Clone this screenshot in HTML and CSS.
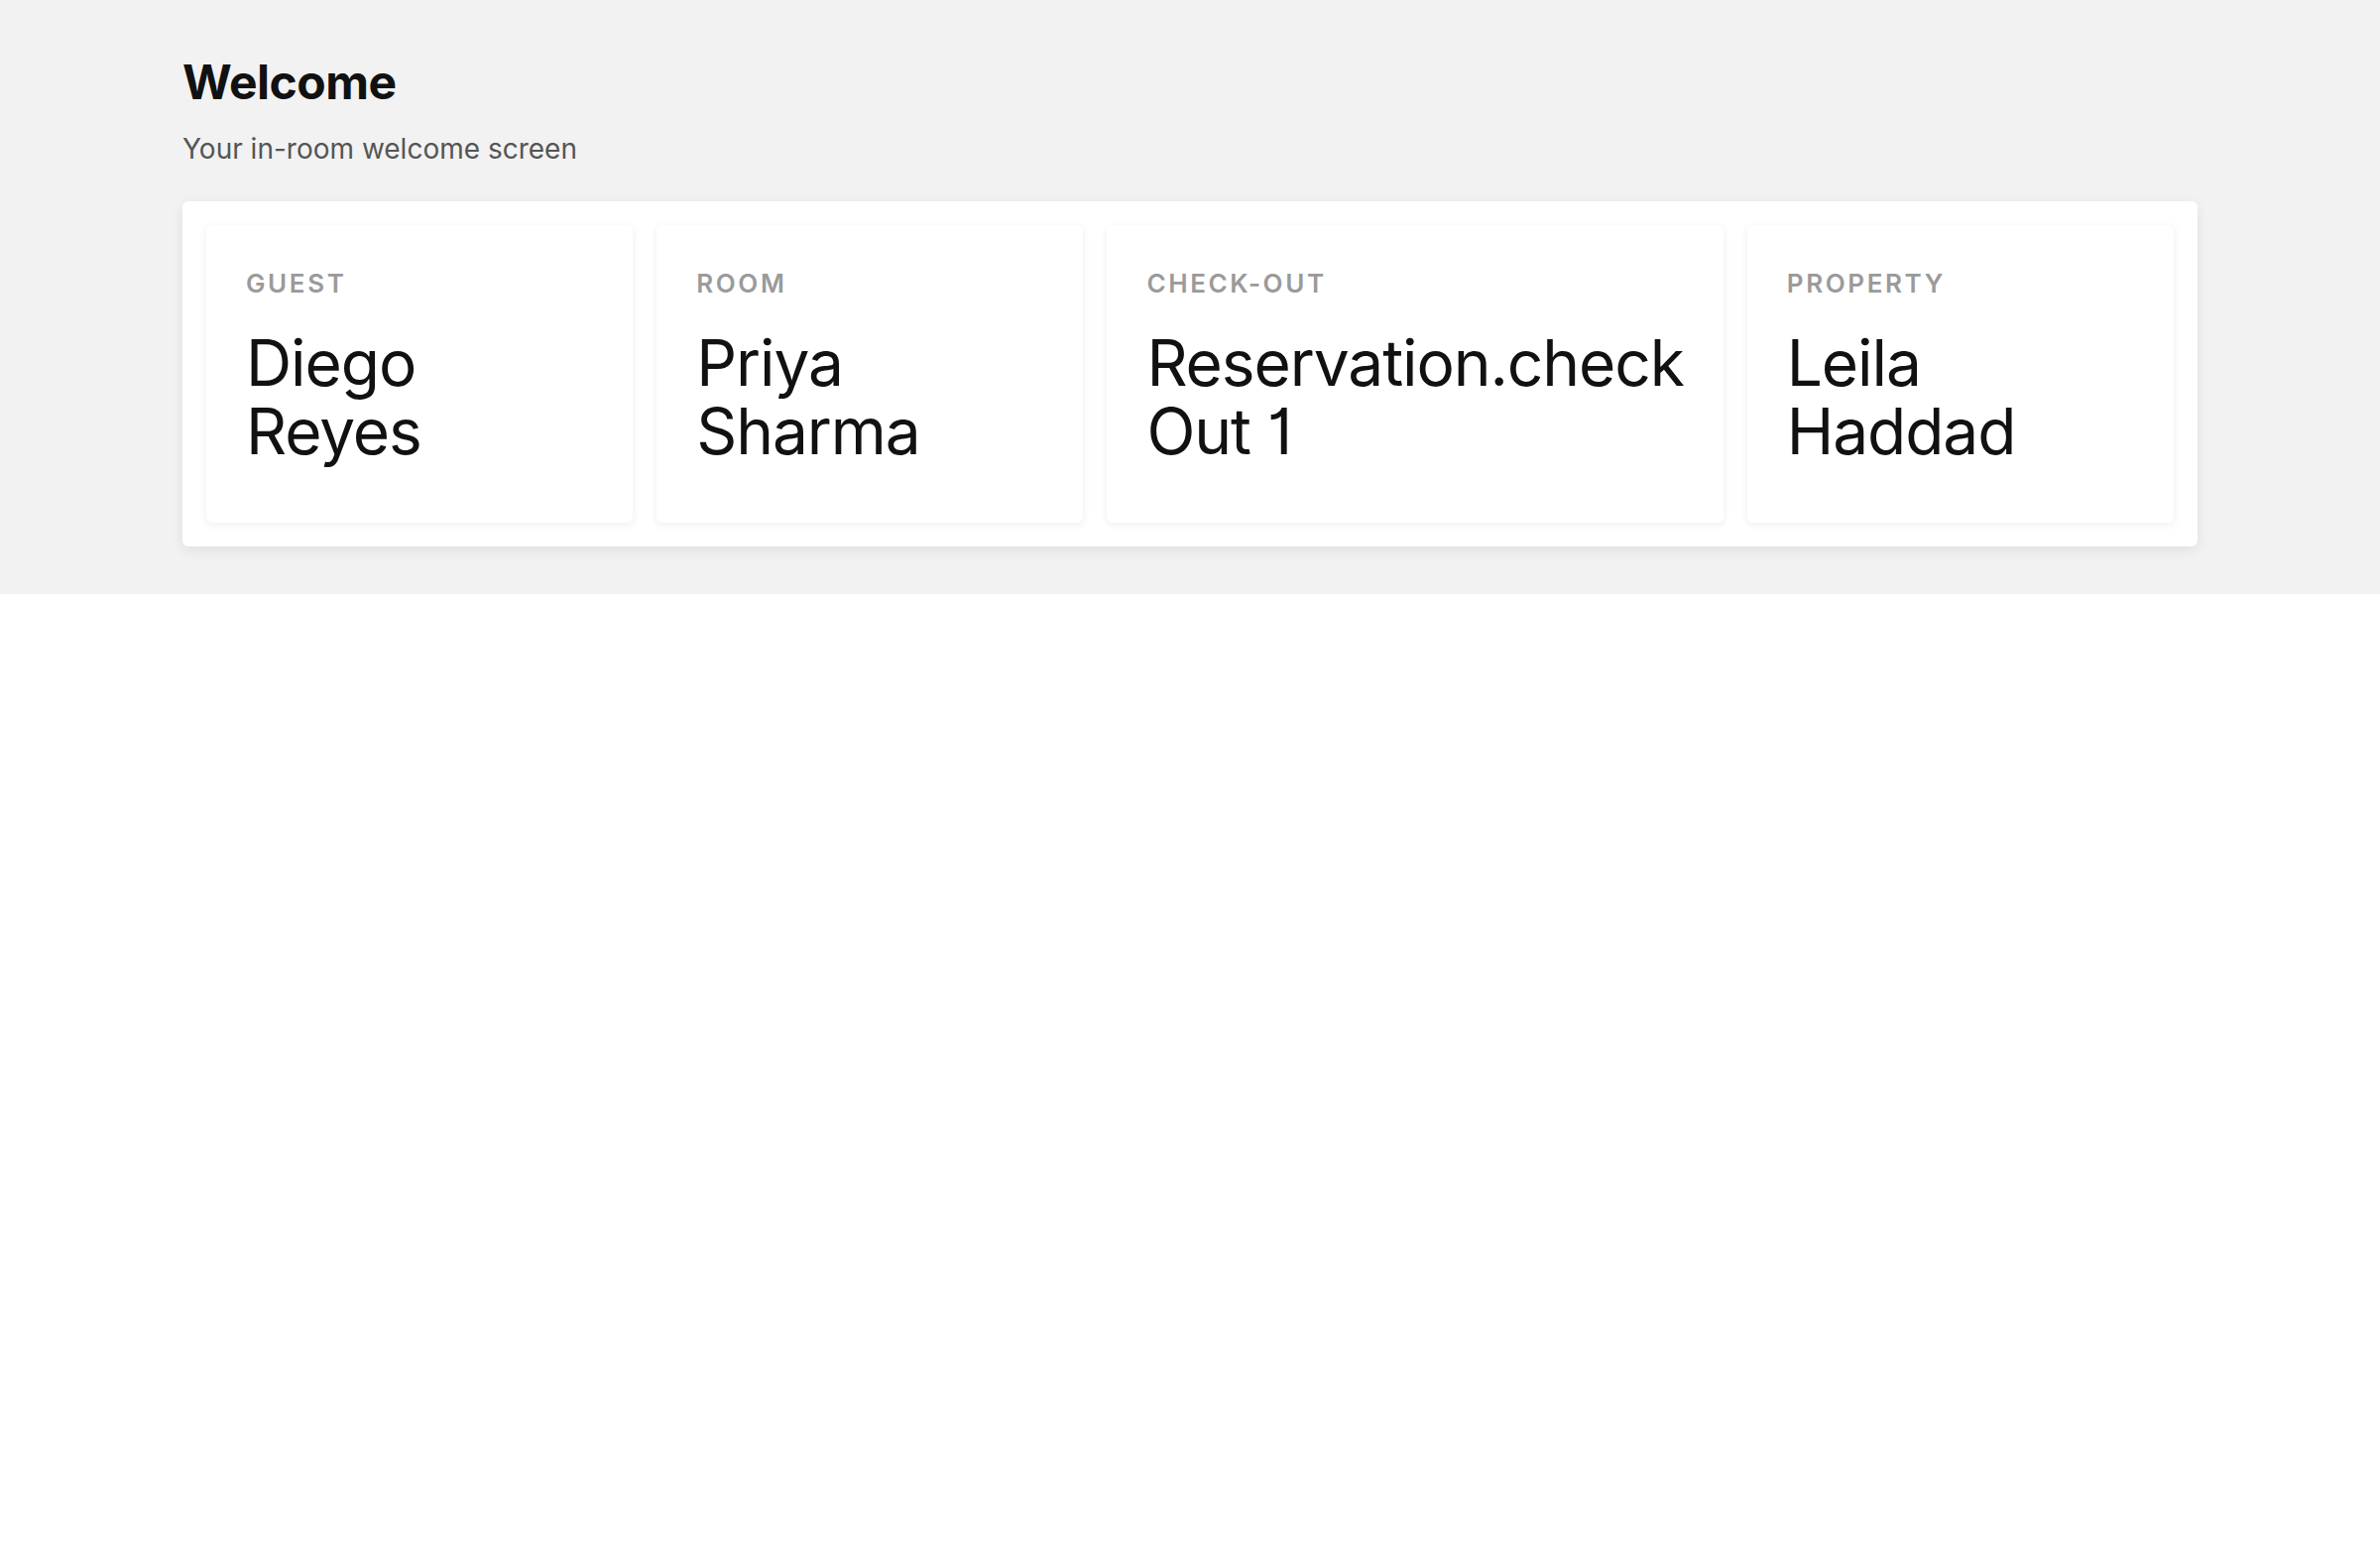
FILE: index.html
```html
<!DOCTYPE html>
<html>

	<head>
		<meta charset="UTF-8">
		<title>Welcome</title>
		<link rel="stylesheet" href="styles.css">
	</head>

	<body>
		<!--页头：标题 + 信息卡片-->
		<div class="hero">
			<div class="wrap">
				<h1 class="title">Welcome</h1>
				<p class="subtitle">Your in-room welcome screen</p>

				<div class="panel">
					<div class="info-card">
						<div class="info-label">Guest</div>
						<div class="info-value">Diego Reyes</div>
					</div>
					<div class="info-card">
						<div class="info-label">Room</div>
						<div class="info-value">Priya Sharma</div>
					</div>
					<div class="info-card">
						<div class="info-label">Check-out</div>
						<div class="info-value">Reservation.check Out 1</div>
					</div>
					<div class="info-card">
						<div class="info-label">Property</div>
						<div class="info-value">Leila Haddad</div>
					</div>
				</div>
			</div>
		</div>
	</body>

</html>
```

FILE: styles.css
```css
* {
	margin: 0;
	padding: 0;
	box-sizing: border-box;
}

body {
	background: #fff;
	font-family: Inter, "Noto Sans", sans-serif;
	color: #111;
}

.hero {
	background: #f2f2f2;
	padding: 53px 0 48px;
}

.wrap {
	max-width: 2032px;
	margin: 0 auto;
}

.title {
	font-size: 48px;
	font-weight: 700;
	line-height: 1.25;
	letter-spacing: -0.01em;
	color: #111;
}

.subtitle {
	margin-top: 16px;
	margin-bottom: 32px;
	font-size: 28px;
	line-height: 1.5;
	color: #555;
}

/*白色外框，里面四张卡片横排*/
.panel {
	display: flex;
	gap: 24px;
	padding: 24px;
	background: #fff;
	border-radius: 6px;
	box-shadow: 0 4px 14px rgba(0, 0, 0, 0.08);
}

.info-card {
	flex: 1;
	padding: 39px 40px 58px;
	background: #fff;
	border-radius: 6px;
	box-shadow: 0 2px 8px rgba(0, 0, 0, 0.07);
}

.info-label {
	font-size: 26px;
	font-weight: 600;
	line-height: 1.5;
	letter-spacing: 0.1em;
	text-transform: uppercase;
	color: #9a9a9a;
}

.info-value {
	margin-top: 26px;
	font-size: 64px;
	line-height: 1.08;
	letter-spacing: -0.017em;
	font-feature-settings: "cv01";
	color: #111;
}
```
